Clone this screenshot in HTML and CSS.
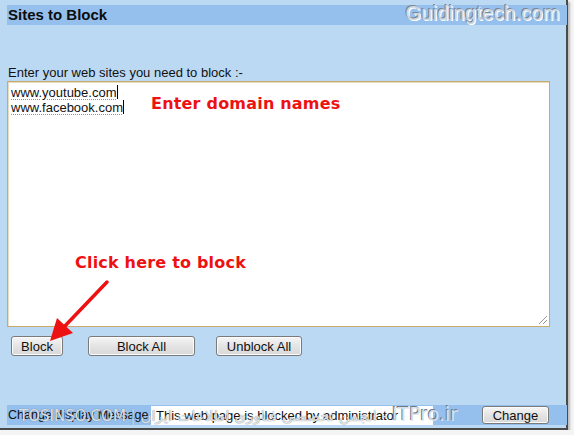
FILE: index.html
```html
<!DOCTYPE html>
<html>
<head>
<meta charset="utf-8">
<link rel="stylesheet" href="styles.css">
</head>
<body>
<div class="panel">
  <div class="header">Sites to Block</div>
  <div class="brand">Guidingtech.com</div>
  <div class="label">Enter your web sites you need to block :-</div>
  <div class="area">
    <div class="line"><span class="sp">www.youtube.com</span><span class="caret"></span></div>
    <div class="line"><span class="sp">www.facebook.com</span><span class="caret"></span></div>
    <div class="grip"></div>
  </div>
  <div class="buttons">
    <button class="btn b1">Block</button>
    <button class="btn b2">Block All</button>
    <button class="btn b3">Unblock All</button>
  </div>
  <div class="footer">
    <span class="flabel">Change display Message :-</span>
    <div class="finput">This web page is blocked by administrator</div>
    <button class="btn change">Change</button>
  </div>
  <div class="note n1">Enter domain names</div>
  <div class="note n2">Click here to block</div>
  <svg class="arrow" width="80" height="70" viewBox="0 0 80 70">
    <line x1="62" y1="4" x2="18" y2="50" stroke="#ee1111" stroke-width="3.5" stroke-linecap="round"/>
    <polygon points="5,63 12,40 28,55" fill="#ee1111"/>
  </svg>
  <div class="wm">TOSINSO.COM | <span dir="rtl">انجمن تخصصی فناوری اطلاعات ایران</span> - <span class="itpro">ITPro.ir</span></div>
</div>
</body>
</html>
```
FILE: styles.css
```css
html, body {
  margin: 0;
  padding: 0;
  background: #f4f4f4;
}
.panel {
  position: relative;
  width: 568px;
  height: 430px;
  background: #bcd9f3;
  border-right: 2px solid #4a4a4a;
  border-bottom: 2px solid #4a4a4a;
  box-shadow: 2px 2px 2px #bbbbbb;
  font-family: "Liberation Sans", Arial, sans-serif;
  font-size: 13px;
  color: #111;
  display: flex;
  flex-direction: column;
  padding-left: 7px;
  box-sizing: border-box;
}
.header {
  margin-top: 5px;
  width: 560px;
  height: 20px;
  background: #95bfec;
  font-weight: bold;
  font-size: 15px;
  line-height: 20px;
  padding-left: 1px;
  box-sizing: border-box;
  color: #0c0c0c;
}
.brand {
  position: absolute;
  right: 6px;
  top: 2px;
  font-size: 20px;
  color: #d0d8e0;
  letter-spacing: 0.3px;
  text-shadow: -1px -1px 0 #7a8694, 1px 1px 0 #ffffff;
}
.label {
  margin-top: 39px;
  margin-left: 1px;
  height: 17px;
  line-height: 17px;
}
.area {
  position: relative;
  width: 543px;
  height: 246px;
  background: #fff;
  border: 1px solid #c8aa70;
  box-shadow: inset 1px 1px 0 #e8dcc0;
  box-sizing: border-box;
  padding: 3px 0 0 3px;
}
.line {
  height: 15px;
  line-height: 15px;
}
.sp {
  text-decoration: underline dotted #e07070;
  text-decoration-thickness: 1px;
  text-underline-offset: 2px;
}
.caret {
  display: inline-block;
  width: 1px;
  height: 14px;
  background: #000;
  vertical-align: -2px;
}
.grip {
  position: absolute;
  right: 2px;
  bottom: 2px;
  width: 8px;
  height: 8px;
  background: linear-gradient(135deg, transparent 45%, #999 45%, #999 52%, transparent 52%, transparent 70%, #999 70%, #999 77%, transparent 77%);
}
.buttons {
  display: flex;
  margin-top: 9px;
  margin-left: 4px;
  height: 20px;
}
.btn {
  font-family: "Liberation Sans", Arial, sans-serif;
  font-size: 13px;
  color: #111;
  height: 20px;
  padding: 0;
  border: 1px solid #7a7a7a;
  border-radius: 3px;
  background: linear-gradient(#f6f6f6, #e4e4e4 50%, #d8d8d8);
  box-shadow: inset 0 0 0 1px #fbfbfb;
}
.b1 { width: 52px; }
.b2 { width: 107px; margin-left: 25px; }
.b3 { width: 86px; margin-left: 21px; }
.footer {
  margin-top: 49px;
  width: 560px;
  height: 20px;
  background: #95bfec;
  display: flex;
  align-items: center;
}
.flabel {
  margin-left: 1px;
  width: 143px;
  flex-shrink: 0;
  white-space: nowrap;
  font-size: 12.5px;
}
.finput {
  width: 282px;
  height: 19px;
  line-height: 19px;
  background: #fff;
  padding-left: 5px;
  box-sizing: border-box;
  white-space: nowrap;
  overflow: hidden;
  flex-shrink: 0;
}
.change {
  margin-left: 49px;
  width: 67px;
  height: 18px;
  flex-shrink: 0;
}
.note {
  position: absolute;
  color: #ee1111;
  font-family: "DejaVu Sans", sans-serif;
  font-weight: bold;
  font-size: 16px;
  letter-spacing: 0.2px;
}
.n1 { left: 151px; top: 94px; }
.n2 { left: 75px; top: 253px; }
.arrow {
  position: absolute;
  left: 45px;
  top: 278px;
}
.wm {
  position: absolute;
  left: 19px;
  top: 403px;
  font-size: 15px;
  color: rgba(255, 255, 255, 0.8);
  text-shadow: 0 0 1px #55606a;
  white-space: nowrap;
  font-family: "DejaVu Sans", sans-serif;
}
.itpro {
  font-size: 19px;
  color: rgba(220, 228, 236, 0.95);
  text-shadow: -1px -1px 0 #6e7c8a;
}
```
